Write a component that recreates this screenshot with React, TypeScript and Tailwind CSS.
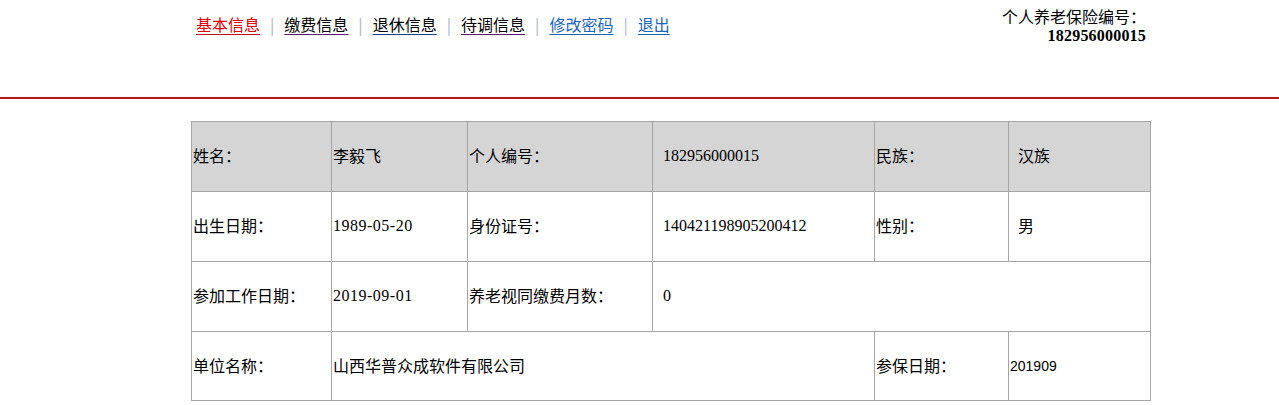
import React from "react";

const cjk = "font-['SimSun','Noto_Sans_CJK_SC',sans-serif]";

function Sep() {
  return <span className="text-[#a8b4c4] px-[10px]">|</span>;
}

export default function App() {
  const cell = "border border-[#a6a6a6] align-middle text-[16px] text-black py-0 pr-0 pb-[3px]";
  const num = "font-['Liberation_Serif',serif] text-[16px]";
  const date = "font-['Liberation_Serif',serif] text-[16px] tracking-[0.5px]";
  return (
    <div className={`w-[1279px] min-h-[405px] bg-white ${cjk}`}>
      <div className="h-[99px] border-b-2 border-[#b3161b] flex justify-between">
        <div className="pl-[196px] pt-[14px] text-[16px] leading-[20px] flex items-start">
          <a className="text-[#e00000] underline decoration-[#c0102a] underline-offset-[3px]">基本信息</a>
          <Sep />
          <a className="text-black underline decoration-[#5a1a6a] underline-offset-[3px]">缴费信息</a>
          <Sep />
          <a className="text-black underline decoration-[#1a3f8a] underline-offset-[3px]">退休信息</a>
          <Sep />
          <a className="text-black underline decoration-[#5a1a6a] underline-offset-[3px]">待调信息</a>
          <Sep />
          <a className="text-[#1a66bd] underline decoration-[#1a66bd] underline-offset-[3px]">修改密码</a>
          <Sep />
          <a className="text-[#1a66bd] underline decoration-[#1a66bd] underline-offset-[3px]">退出</a>
        </div>
        <div className="pr-[133px] pt-[7px] text-right text-[16px] leading-[19px] text-black">
          <div>个人养老保险编号：</div>
          <div className="font-['Liberation_Serif',serif] font-bold tracking-[0.2px]">182956000015</div>
        </div>
      </div>
      <div className="pt-[22px] pl-[191px]">
        <table className="table-fixed border-collapse w-[960px]">
          <colgroup>
            <col className="w-[140px]" />
            <col className="w-[136px]" />
            <col className="w-[185px]" />
            <col className="w-[222px]" />
            <col className="w-[134px]" />
            <col className="w-[142px]" />
          </colgroup>
          <tbody>
            <tr className="h-[70px] bg-[#d5d5d5]">
              <td className={`${cell} pl-[1px]`}>姓名：</td>
              <td className={`${cell} pl-[1px]`}>李毅飞</td>
              <td className={`${cell} pl-[1px]`}>个人编号：</td>
              <td className={`${cell} pl-[10px]`}><span className={num}>182956000015</span></td>
              <td className={`${cell} pl-[1px]`}>民族：</td>
              <td className={`${cell} pl-[9px]`}>汉族</td>
            </tr>
            <tr className="h-[70px]">
              <td className={`${cell} pl-[1px]`}>出生日期：</td>
              <td className={`${cell} pl-[1px]`}><span className={date}>1989-05-20</span></td>
              <td className={`${cell} pl-[1px]`}>身份证号：</td>
              <td className={`${cell} pl-[10px]`}><span className={num}>140421198905200412</span></td>
              <td className={`${cell} pl-[1px]`}>性别：</td>
              <td className={`${cell} pl-[9px]`}>男</td>
            </tr>
            <tr className="h-[70px]">
              <td className={`${cell} pl-[1px]`}>参加工作日期：</td>
              <td className={`${cell} pl-[1px]`}><span className={date}>2019-09-01</span></td>
              <td className={`${cell} pl-[1px]`}>养老视同缴费月数：</td>
              <td className={`${cell} pl-[10px]`} colSpan={3}><span className={num}>0</span></td>
            </tr>
            <tr className="h-[69px]">
              <td className={`${cell} pl-[1px]`}>单位名称：</td>
              <td className={`${cell} pl-[1px]`} colSpan={3}>山西华普众成软件有限公司</td>
              <td className={`${cell} pl-[1px]`}>参保日期：</td>
              <td className={`${cell} pl-[1px]`}><span className="font-['Liberation_Sans',sans-serif] text-[14px]">201909</span></td>
            </tr>
          </tbody>
        </table>
      </div>
    </div>
  );
}
